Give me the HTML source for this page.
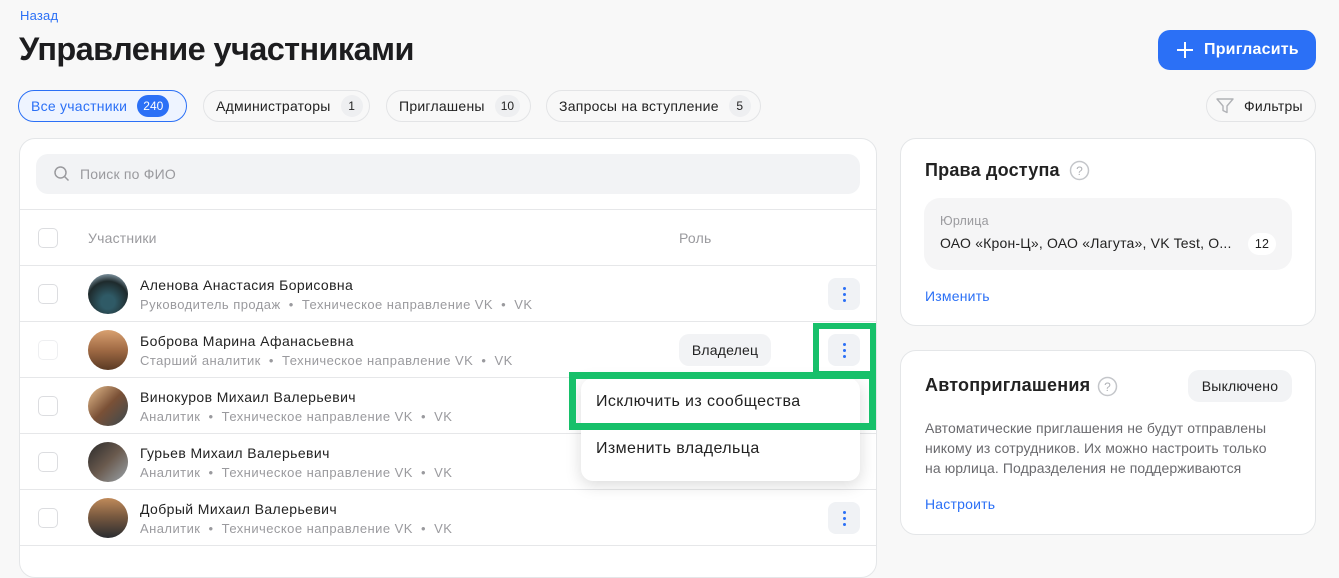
<!DOCTYPE html>
<html><head><meta charset="utf-8"><style>
*{box-sizing:border-box;margin:0;padding:0}
body{width:1339px;height:552px;overflow:hidden;background:#f8f8f8;font-family:"Liberation Sans",sans-serif;color:#222;position:relative;letter-spacing:0.2px}
.a{position:absolute;white-space:nowrap}
.blue{color:#2b70f6}
.tab{position:absolute;top:90px;height:32px;border:1px solid #e3e4e6;border-radius:16px;background:#f8f8f8;font-size:14px;display:flex;align-items:center;padding:0 12px;color:#222;letter-spacing:0.25px;white-space:nowrap}
.cnt{margin-left:10px;min-width:22px;height:22px;border-radius:11px;background:#eeeff1;font-size:12px;display:flex;align-items:center;justify-content:center;padding:0 6px;letter-spacing:0;flex-shrink:0}
.card{position:absolute;background:#fff;border:1px solid #e4e6e8;border-radius:16px}
.cb{position:absolute;left:38px;width:20px;height:20px;border:1.5px solid #dcdde0;border-radius:5px;background:#fff}
.av{position:absolute;left:88px;width:40px;height:40px;border-radius:50%}
.nm{position:absolute;left:140px;font-size:14px;color:#222;letter-spacing:0.4px;white-space:nowrap}
.sb{position:absolute;left:140px;font-size:13px;color:#9a9a9e;white-space:nowrap;letter-spacing:0.45px}
.sep{position:absolute;left:20px;width:856px;height:1px;background:#e6e7e9}
.keb{position:absolute;left:828px;width:32px;height:32px;border-radius:8px;background:#f0f2f5}
.keb i{position:absolute;left:15px;width:3px;height:3px;border-radius:50%;background:#2b70f6}
</style></head><body>
<div class="a blue" style="left:20px;top:8px;font-size:13px">Назад</div>
<div class="a" style="left:19px;top:31px;font-size:32.5px;font-weight:bold;letter-spacing:-0.6px;color:#1d1d1f">Управление участниками</div>
<div class="a" style="left:1158px;top:30px;width:158px;height:40px;border-radius:12px;background:#2b70f6;color:#fff;font-size:16px;font-weight:bold;display:flex;align-items:center;padding-left:18px">
<svg width="18" height="18" viewBox="0 0 18 18" style="margin-right:10px"><path d="M9 1v16M1 9h16" stroke="#fff" stroke-width="2"/></svg>Пригласить</div>

<div class="tab" style="left:18px;width:169px;border-color:#2b70f6;background:#eef4ff;color:#2b70f6">Все участники<span class="cnt" style="background:#2b70f6;color:#fff">240</span></div>
<div class="tab" style="left:203px;width:167px">Администраторы<span class="cnt">1</span></div>
<div class="tab" style="left:386px;width:145px">Приглашены<span class="cnt">10</span></div>
<div class="tab" style="left:546px;width:215px">Запросы на вступление<span class="cnt">5</span></div>
<div class="tab" style="left:1206px;width:110px;padding:0 8px"><svg width="20" height="20" viewBox="0 0 20 20" style="margin-right:9px;flex-shrink:0"><path d="M2 3h16l-6 7v6.5l-4-2V10z" fill="none" stroke="#b0b2b6" stroke-width="1.4" stroke-linejoin="round"/></svg>Фильтры</div>

<div class="card" style="left:19px;top:138px;width:858px;height:440px"></div>
<div class="a" style="left:36px;top:154px;width:824px;height:40px;border-radius:12px;background:#f2f3f5"></div>
<svg class="a" style="left:53px;top:165px" width="18" height="18" viewBox="0 0 18 18"><circle cx="7.5" cy="7.5" r="5.5" fill="none" stroke="#9a9a9e" stroke-width="1.5"/><path d="M11.5 11.5l4 4" stroke="#9a9a9e" stroke-width="1.5"/></svg>
<div class="a" style="left:80px;top:166px;font-size:14px;color:#9a9a9e">Поиск по ФИО</div>
<div class="sep" style="top:209px"></div>
<div class="cb" style="top:228px"></div>
<div class="a" style="left:88px;top:230px;font-size:14px;color:#9a9a9e">Участники</div>
<div class="a" style="left:679px;top:230px;font-size:14px;color:#9a9a9e">Роль</div>
<div class="sep" style="top:265px"></div>
<div class="sep" style="top:321px"></div>
<div class="sep" style="top:377px"></div>
<div class="sep" style="top:433px"></div>
<div class="sep" style="top:489px"></div>
<div class="sep" style="top:545px"></div>

<div class="cb" style="top:284px"></div>
<div class="av" style="top:274px;background:radial-gradient(circle at 50% 70%,#2f5a66 20%,#1e2a2c 60%,#9fb8c8 90%)"></div>
<div class="nm" style="top:277px">Аленова Анастасия Борисовна</div>
<div class="sb" style="top:297px">Руководитель продаж &nbsp;•&nbsp; Техническое направление VK &nbsp;•&nbsp; VK</div>
<div class="keb" style="top:278px"><i style="top:9px"></i><i style="top:15px"></i><i style="top:21px"></i></div>

<div class="cb" style="top:340px;border-color:#eeeff1"></div>
<div class="av" style="top:330px;background:linear-gradient(180deg,#d8a070,#a06a44 50%,#5a3a24)"></div>
<div class="nm" style="top:333px">Боброва Марина Афанасьевна</div>
<div class="sb" style="top:353px">Старший аналитик &nbsp;•&nbsp; Техническое направление VK &nbsp;•&nbsp; VK</div>
<div class="a" style="left:679px;top:334px;width:92px;height:32px;border-radius:10px;background:#f2f3f5;font-size:14px;display:flex;align-items:center;justify-content:center">Владелец</div>
<div class="a" style="left:813px;top:323px;width:63px;height:54px;border:6px solid #17c06a"></div>
<div class="keb" style="top:334px"><i style="top:9px"></i><i style="top:15px"></i><i style="top:21px"></i></div>

<div class="cb" style="top:396px"></div>
<div class="av" style="top:386px;background:linear-gradient(135deg,#e8c090,#7a5036 50%,#3a4a50)"></div>
<div class="nm" style="top:389px">Винокуров Михаил Валерьевич</div>
<div class="sb" style="top:409px">Аналитик &nbsp;•&nbsp; Техническое направление VK &nbsp;•&nbsp; VK</div>

<div class="cb" style="top:452px"></div>
<div class="av" style="top:442px;background:linear-gradient(135deg,#2a2a2a,#6a5a4e 50%,#9aa4aa)"></div>
<div class="nm" style="top:445px">Гурьев Михаил Валерьевич</div>
<div class="sb" style="top:465px">Аналитик &nbsp;•&nbsp; Техническое направление VK &nbsp;•&nbsp; VK</div>

<div class="cb" style="top:508px"></div>
<div class="av" style="top:498px;background:linear-gradient(180deg,#c08a5a,#7a5a40 45%,#2a2c30)"></div>
<div class="nm" style="top:501px">Добрый Михаил Валерьевич</div>
<div class="sb" style="top:521px">Аналитик &nbsp;•&nbsp; Техническое направление VK &nbsp;•&nbsp; VK</div>
<div class="keb" style="top:502px"><i style="top:9px"></i><i style="top:15px"></i><i style="top:21px"></i></div>

<div class="a" style="left:581px;top:378px;width:279px;height:103px;background:#fff;border-radius:12px;box-shadow:0 4px 16px rgba(0,0,0,.15)"></div>
<div class="a" style="left:569px;top:372px;width:307px;height:58px;border:7px solid #17c06a"></div>
<div class="a" style="left:596px;top:393px;font-size:16px;color:#222;letter-spacing:0.4px">Исключить из сообщества</div>
<div class="a" style="left:596px;top:440px;font-size:16px;color:#222;letter-spacing:0.4px">Изменить владельца</div>

<div class="card" style="left:900px;top:138px;width:416px;height:188px"></div>
<div class="a" style="left:925px;top:160px;font-size:18px;font-weight:bold">Права доступа</div>
<svg class="a" style="left:1069px;top:160px" width="21" height="21" viewBox="0 0 21 21"><circle cx="10.5" cy="10.5" r="9" fill="none" stroke="#c4c6ca" stroke-width="1.5"/><text x="10.5" y="15" font-size="12" text-anchor="middle" fill="#b0b2b6" font-family="Liberation Sans">?</text></svg>
<div class="a" style="left:924px;top:198px;width:368px;height:72px;border-radius:16px;background:#f5f5f6"></div>
<div class="a" style="left:940px;top:214px;font-size:12.5px;color:#9a9a9e">Юрлица</div>
<div class="a" style="left:940px;top:235px;font-size:14px;letter-spacing:0.2px">ОАО «Крон-Ц», ОАО «Лагута», VK Test, О...</div>
<div class="a" style="left:1248px;top:233px;width:28px;height:22px;border-radius:11px;background:#fff;font-size:12.5px;display:flex;align-items:center;justify-content:center">12</div>
<div class="a blue" style="left:925px;top:288px;font-size:14px">Изменить</div>

<div class="card" style="left:900px;top:350px;width:416px;height:185px"></div>
<div class="a" style="left:925px;top:375px;font-size:18px;font-weight:bold">Автоприглашения</div>
<svg class="a" style="left:1097px;top:376px" width="21" height="21" viewBox="0 0 21 21"><circle cx="10.5" cy="10.5" r="9" fill="none" stroke="#c4c6ca" stroke-width="1.5"/><text x="10.5" y="15" font-size="12" text-anchor="middle" fill="#b0b2b6" font-family="Liberation Sans">?</text></svg>
<div class="a" style="left:1188px;top:370px;width:104px;height:32px;border-radius:11px;background:#f2f3f5;font-size:14px;display:flex;align-items:center;justify-content:center">Выключено</div>
<div class="a" style="left:925px;top:418px;width:366px;font-size:14px;line-height:20px;color:#6a6a6e;letter-spacing:0.1px">Автоматические приглашения не будут отправлены<br>никому из сотрудников. Их можно настроить только<br>на юрлица. Подразделения не поддерживаются</div>
<div class="a blue" style="left:925px;top:496px;font-size:14px">Настроить</div>
</body></html>
